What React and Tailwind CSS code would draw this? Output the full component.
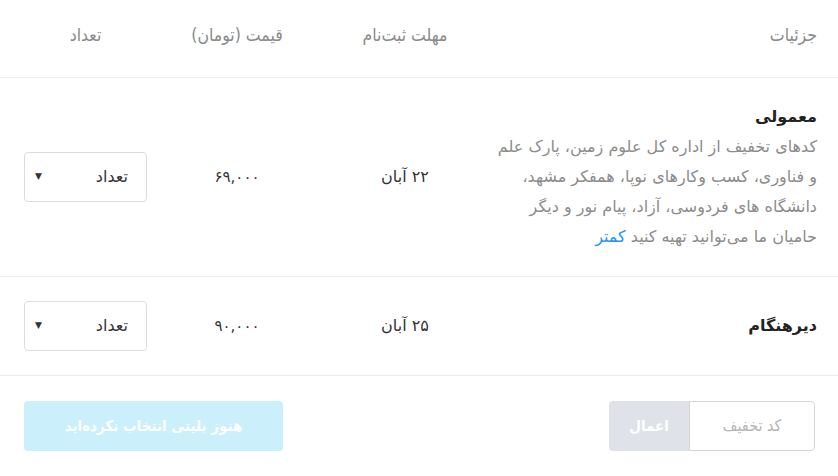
const ROWS = [
  {
    title: "معمولی",
    desc: "کدهای تخفیف از اداره کل علوم زمین، پارک علم و فناوری، کسب وکارهای نوپا، همفکر مشهد، دانشگاه های فردوسی، آزاد، پیام نور و دیگر حامیان ما می‌توانید تهیه کنید",
    date: "۲۲ آبان",
    price: "۶۹,۰۰۰",
  },
  { title: "دیرهنگام", date: "۲۵ آبان", price: "۹۰,۰۰۰" },
];

const GRID = "grid grid-cols-[334px_156px_180px_123px] items-center";

function CountSelect() {
  return (
    <div className="flex h-[50px] w-[123px] items-center justify-between rounded-[4px] border border-[#dcdcdc] bg-white pr-[18px] pl-[10px]">
      <span className="text-[16px] text-[#333]">تعداد</span>
      <span className="text-[9px] text-[#333]">▼</span>
    </div>
  );
}

export default function App() {
  return (
    <div dir="rtl" className="h-[476px] w-[838px] overflow-hidden bg-white font-['DejaVu_Sans',sans-serif]">
      <div className={`${GRID} h-[78px] border-b border-[#ececec] pr-[21px] pl-[24px] pb-[6px] text-[17.5px] text-[#8a8a8a] font-['DejaVu_Sans_Condensed','DejaVu_Sans',sans-serif]`}>
        <div>جزئیات</div>
        <div className="text-center">مهلت ثبت‌نام</div>
        <div className="text-center">قیمت (تومان)</div>
        <div className="text-center">تعداد</div>
      </div>

      {ROWS.map((r) => (
        <div key={r.title} className={`${GRID} border-b border-[#ececec] py-6 pr-[21px] pl-[24px]`}>
          <div className="pl-[8px] text-[16px] leading-[30px]">
            <div className="font-bold text-[#222]">{r.title}</div>
            {r.desc && (
              <p className="text-[#8c8c8c]">
                {r.desc} <span className="text-[#2196f3]">کمتر</span>
              </p>
            )}
          </div>
          <div className="text-center text-[16px] text-[#333]">{r.date}</div>
          <div className="text-center text-[15px] text-[#333]">{r.price}</div>
          <CountSelect />
        </div>
      ))}

      <div className="flex items-center justify-between pt-[25px] pr-[23px] pl-[24px]">
        <div className="flex h-[50px]">
          <div className="flex w-[126px] items-center justify-center rounded-r-[4px] border border-[#d4d4d4] text-[16px] text-[#b5b5b5] font-['DejaVu_Sans_Condensed','DejaVu_Sans',sans-serif]">
            کد تخفیف
          </div>
          <div className="flex w-[80px] items-center justify-center rounded-l-[4px] bg-[#dfe2e8] text-[15px] font-bold text-white font-['DejaVu_Sans_Condensed','DejaVu_Sans',sans-serif]">
            اعمال
          </div>
        </div>
        <div className="flex h-[50px] w-[259px] items-center justify-center rounded-[4px] bg-[#cbeffb] text-[15px] font-bold text-white font-['DejaVu_Sans_Condensed','DejaVu_Sans',sans-serif]">
          هنوز بلیتی انتخاب نکرده‌اید
        </div>
      </div>
    </div>
  );
}
